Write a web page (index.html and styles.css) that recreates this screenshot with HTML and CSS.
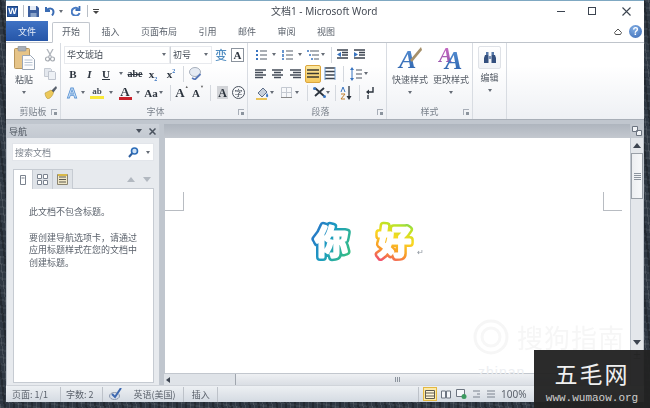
FILE: index.html
```html
<!DOCTYPE html>
<html lang="zh">
<head>
<meta charset="utf-8">
<title>文档1 - Microsoft Word</title>
<link rel="stylesheet" href="styles.css">
</head>
<body>
<svg class="defs" width="0" height="0">
  <defs>
    <symbol id="l-left" viewBox="0 0 12 10"><path d="M0 1h11M0 3.5h8M0 6h11M0 8.500h8" stroke="#444c58" stroke-width="1.300"/></symbol>
    <symbol id="l-center" viewBox="0 0 12 10"><path d="M0 1h11M2 3.500h7M0 6h11M2 8.500h7" stroke="#444c58" stroke-width="1.300"/></symbol>
    <symbol id="l-right" viewBox="0 0 12 10"><path d="M0 1h11M3 3.500h8M0 6h11M3 8.500h8" stroke="#444c58" stroke-width="1.300"/></symbol>
    <linearGradient id="g-ni" gradientUnits="userSpaceOnUse" x1="8" y1="0" x2="50" y2="20">
      <stop offset="0" stop-color="#2a72c8"/><stop offset=".45" stop-color="#1c9cc0"/><stop offset="1" stop-color="#38c080"/>
    </linearGradient>
    <linearGradient id="g-hao" gradientUnits="userSpaceOnUse" x1="100" y1="2" x2="84" y2="50">
      <stop offset="0" stop-color="#2cb8a0"/><stop offset=".22" stop-color="#b4e428"/><stop offset=".48" stop-color="#fbd820"/><stop offset=".76" stop-color="#f89a28"/><stop offset="1" stop-color="#f0506c"/>
    </linearGradient>
    <linearGradient id="g-a1" x1="0" y1="0" x2="0" y2="1"><stop offset="0" stop-color="#5a94d8"/><stop offset="1" stop-color="#2a5ea8"/></linearGradient>
    <linearGradient id="g-a2" x1="0" y1="0" x2="0" y2="1"><stop offset="0" stop-color="#d070c8"/><stop offset="1" stop-color="#9050a8"/></linearGradient>
  </defs>
</svg>

<div class="window">
  <header class="titlebar">
    <div class="qat">
      <span class="wlogo">W</span>
      <span class="qsep"></span>
      <svg class="q-save" width="11" height="11" viewBox="0 0 11 11"><path d="M0 0h9l2 2v9H0z" fill="#3d5f9e"/><path d="M2 0h6v4H2z" fill="#e4ebf5"/><path d="M2.500 7h6v4h-6z" fill="#8aa3c9"/></svg>
      <svg class="q-undo" width="10" height="10" viewBox="0 0 10 10"><path d="M1 1v4h4M1.500 4.500C4 1.500 8.500 2 8.500 6c0 1.500-.6 2.500-1.500 3.500" fill="none" stroke="#3a6cb4" stroke-width="2"/></svg>
      <span class="dd q-dd1"></span>
      <svg class="q-redo" width="10" height="10" viewBox="0 0 10 10"><path d="M8.500 0v4h-4" fill="none" stroke="#3a6cb4" stroke-width="1.800"/><path d="M8 3.500A4 4 0 1 0 8.500 7" fill="none" stroke="#4a7cc4" stroke-width="2"/></svg>
      <span class="qsep q-sep2"></span>
      <span class="q-more"></span>
    </div>
    <div class="doc-title">文档1 - Microsoft Word</div>
    <div class="winctl">
      <span class="wmin"></span>
      <span class="wmax"></span>
      <svg class="wclose" width="9" height="9" viewBox="0 0 9 9"><path d="M.5.500l8 8M8.500.500l-8 8" stroke="#3c4450" stroke-width="1.100"/></svg>
    </div>
  </header>

  <nav class="tabs">
    <span class="tab-file">文件</span>
    <span class="tab tab-on">开始</span>
    <span class="tab">插入</span>
    <span class="tab">页面布局</span>
    <span class="tab">引用</span>
    <span class="tab">邮件</span>
    <span class="tab">审阅</span>
    <span class="tab">视图</span>
    <span class="tabs-right">
      <svg width="8" height="8" viewBox="0 0 8 8"><path d="M.5 4.500L4 1l3.500 3.500-1 2h-5z" fill="none" stroke="#555" stroke-width="1"/></svg>
      <span class="help">?</span>
    </span>
  </nav>

  <section class="ribbon">
    <div class="group g-clip">
      <div class="g-body clip-body">
        <div class="paste">
          <svg width="21" height="24" viewBox="0 0 21 24"><rect x=".5" y="2.500" width="15" height="20" rx="1" fill="#e6c488" stroke="#b8965c"/><rect x="4" y="0" width="8" height="5" rx="1" fill="#a9afb8" stroke="#878d96" stroke-width=".6"/><path d="M8.500 9.500h8l4 4v10h-12z" fill="#fdfdfe" stroke="#9aa6b6"/><path d="M10.500 14h8M10.500 16.500h8M10.500 19h8" stroke="#b8c4d2"/></svg>
          <span class="big-lab">粘贴</span>
          <span class="dd"></span>
        </div>
        <div class="clip-tools">
          <svg width="10" height="13" viewBox="0 0 10 13"><path d="M2 0l4.500 8M8 0L3.500 8" stroke="#b0b5bc" stroke-width="1.300"/><circle cx="2.500" cy="10" r="2" fill="none" stroke="#a4a9b0" stroke-width="1.200"/><circle cx="7.500" cy="10" r="2" fill="none" stroke="#a4a9b0" stroke-width="1.200"/></svg>
          <svg width="12" height="12" viewBox="0 0 12 12"><path d="M.5.500h6l1 1v7h-7z" fill="#e4e8ee" stroke="#c6cbd3"/><path d="M4.500 3.500h6l1 1v7h-7z" fill="#eef1f5" stroke="#c0c5ce"/></svg>
          <svg width="13" height="13" viewBox="0 0 13 13"><path d="M12 0L7 5l2 2 4-5z" fill="#58606c"/><path d="M7 4L1 7c0 2 1 5 3 6 3-1 5-4 5.500-6.500z" fill="#ecc85a" stroke="#a98c30" stroke-width=".5"/></svg>
        </div>
      </div>
      <div class="g-label">剪贴板<span class="launch"></span></div>
    </div>

    <div class="group g-font">
      <div class="g-body rows">
        <div class="row r1">
          <span class="combo c-name">华文琥珀<span class="dd"></span></span>
          <span class="combo c-size">初号<span class="dd"></span></span>
          <span class="cell w18 wen">变</span>
          <span class="boxa">A</span>
        </div>
        <div class="row">
          <span class="cell w18 ser"><b>B</b></span>
          <span class="cell w15 ser"><b><i>I</i></b></span>
          <span class="cell w18 ser"><b><u>U</u></b></span>
          <span class="cell w12"><span class="dd"></span></span>
          <span class="cell w16 ser abe"><b><s>abe</s></b></span>
          <span class="cell w20 ser"><b>x<sub class="sb">2</sub></b></span>
          <span class="cell w16 ser"><b>x<sup class="sp">2</sup></b></span>
          <span class="cell w8"><span class="vsep"></span></span>
          <span class="cell w16">
            <svg width="13" height="13" viewBox="0 0 13 13"><ellipse cx="6" cy="5" rx="5.500" ry="4.500" fill="#e6ebf3" stroke="#a8b0bc"/><path d="M3 11l3 1.500L11.500 7" fill="none" stroke="#5878b8" stroke-width="1.800"/></svg>
          </span>
        </div>
        <div class="row">
          <span class="cell w16 glow">A</span>
          <span class="cell w6"><span class="dd"></span></span>
          <span class="cell w22 hl">ab<i class="hlbar"></i></span>
          <span class="cell w2"></span>
          <span class="cell w6 negl"><span class="dd"></span></span>
          <span class="cell w18 ml2 ared ser"><b>A</b><i class="redbar"></i></span>
          <span class="cell w6 ml1"><span class="dd"></span></span>
          <span class="cell w14 ml3 ser"><b>Aa</b></span>
          <span class="cell w6"><span class="dd"></span></span>
          <span class="cell w12"><span class="vsep"></span></span>
          <span class="cell w12 ser big"><b>A</b><sup class="up">▲</sup></span>
          <span class="cell w12 ml4 ser"><b>A</b><sup class="up">▼</sup></span>
          <span class="cell w12"><span class="vsep"></span></span>
          <span class="cell w14 shade ser"><b>A</b></span>
          <span class="cell w14 ml2 circ">字</span>
        </div>
      </div>
      <div class="g-label">字体<span class="launch"></span></div>
    </div>

    <div class="group g-para">
      <div class="g-body rows">
        <div class="row">
          <span class="cell w12"><svg width="11" height="10" viewBox="0 0 11 10"><path d="M0 1h2M0 5h2M0 9h2" stroke="#3874c0" stroke-width="1.800"/><path d="M4 1h7M4 5h7M4 9h7" stroke="#555e6a" stroke-width="1.200"/></svg></span>
          <span class="cell w14"><span class="dd"></span></span>
          <span class="cell w12"><svg width="11" height="10" viewBox="0 0 11 10"><path d="M1 0v3M1 4v3M1 8v2" stroke="#3874c0" stroke-width="1.500"/><path d="M4 1h7M4 5h7M4 9h7" stroke="#555e6a" stroke-width="1.200"/></svg></span>
          <span class="cell w14"><span class="dd"></span></span>
          <span class="cell w12"><svg width="12" height="10" viewBox="0 0 12 10"><path d="M0 1h2M2 5h2M4 9h2" stroke="#3874c0" stroke-width="1.500"/><path d="M3 1h9M5 5h7M7 9h5" stroke="#555e6a" stroke-width="1.200"/></svg></span>
          <span class="cell w8"><span class="dd"></span></span>
          <span class="cell w8"><span class="vsep"></span></span>
          <span class="cell w12 ml1"><svg width="11" height="11" viewBox="0 0 11 11"><path d="M0 1h11M5 3.500h6M5 6h6M0 9h11" stroke="#3c4450" stroke-width="1.300"/><path d="M4 3L0 5.500 4 8z" fill="#3874c0"/></svg></span>
          <span class="cell w12 ml5"><svg width="11" height="11" viewBox="0 0 11 11"><path d="M0 1h11M5 3.500h6M5 6h6M0 9h11" stroke="#3c4450" stroke-width="1.300"/><path d="M0 3l4 2.500L0 8z" fill="#3874c0"/></svg></span>
        </div>
        <div class="row">
          <span class="cell w12"><svg class="ln"><use href="#l-left"/></svg></span>
          <span class="cell w12 ml5"><svg class="ln"><use href="#l-center"/></svg></span>
          <span class="cell w12 ml6"><svg class="ln"><use href="#l-right"/></svg></span>
          <span class="cell w16 ml3 active"><svg width="12" height="9" viewBox="0 0 12 9"><path d="M0 1h12M0 4.500h12M0 8h12" stroke="#3c3a30" stroke-width="1.500"/></svg></span>
          <span class="cell w12 ml3"><svg width="12" height="13" viewBox="0 0 12 13"><path d="M1 1h10M1 4.500h10M1 8h10M1 11.500h10" stroke="#3c4450" stroke-width="1.300"/><path d="M1 0v13M11 0v13" stroke="#6a9ad0" stroke-width="1"/></svg></span>
          <span class="cell w12 ml1"><span class="vsep"></span></span>
          <span class="cell w12 ml1"><svg width="12" height="14" viewBox="0 0 12 14"><path d="M2 0L0 3h4zM2 14L0 11h4z" fill="#3874c0"/><path d="M2 3v8" stroke="#3874c0"/><path d="M6 3h6M6 7h6M6 11h6" stroke="#4c5460" stroke-width="1.200"/></svg></span>
          <span class="cell w8"><span class="dd"></span></span>
        </div>
        <div class="row">
          <span class="cell w14"><svg width="13" height="14" viewBox="0 0 13 14"><path d="M2 7l5-5 4 4-5 5z" fill="#c7d0dc" stroke="#60708a"/><path d="M11 7c1 2 2 3 .5 4s-2-2-.5-4z" fill="#3874c0"/><path d="M0 13h11" stroke="#e8b830" stroke-width="1.600"/></svg></span>
          <span class="cell w10 negl"><span class="dd"></span></span>
          <span class="cell w12 ml3"><svg width="11" height="11" viewBox="0 0 11 11"><path d="M.5.500h10v10H.5zM5.500.500v10M.5 5.500h10" fill="none" stroke="#c4c9d1"/><path d="M0 10.500h11" stroke="#888"/></svg></span>
          <span class="cell w10 negl2"><span class="dd"></span></span>
          <span class="cell w10"><span class="vsep"></span></span>
          <span class="cell w12 ml1"><svg width="13" height="11" viewBox="0 0 13 11"><path d="M2 9L6.500 5 11 9M2 1l4.500 4L11 1" fill="none" stroke="#2c343e" stroke-width="1.800"/><circle cx="1.500" cy="1.500" r="1.500" fill="#3874c0"/><circle cx="11.500" cy="9.500" r="1.500" fill="#3874c0"/></svg></span>
          <span class="cell w6"><span class="dd"></span></span>
          <span class="cell w8"><span class="vsep"></span></span>
          <span class="cell w12 ml1"><svg width="12" height="14" viewBox="0 0 12 14"><path d="M1 6l2-5 2 5" fill="none" stroke="#3874c0"/><path d="M1 8h4L1 13h4" fill="none" stroke="#c08030"/><path d="M9 0v11" stroke="#2c343e" stroke-width="1.300"/><path d="M6.500 10L9 14l2.500-4z" fill="#2c343e"/></svg></span>
          <span class="cell w12 ml1"><span class="vsep"></span></span>
          <span class="cell w8 ml1"><svg width="8" height="12" viewBox="0 0 8 12"><path d="M7 0v5H1" fill="none" stroke="#2c343e" stroke-width="1.400"/><path d="M3 2.500L0 5l3 2.500z" fill="#2c343e"/><path d="M2 8v4" stroke="#2c343e" stroke-width="1.400"/></svg></span>
        </div>
      </div>
      <div class="g-label">段落<span class="launch"></span></div>
    </div>

    <div class="group g-style">
      <div class="g-body style-body">
        <div class="bigbtn">
          <svg class="vis" width="24" height="24" viewBox="0 0 24 24"><text class="big-a" x="1" y="22" fill="url(#g-a1)">A</text><path d="M23 1L12 14l2 2L24 4z" fill="#a6906a"/></svg>
          <span class="big-lab">快速样式</span>
          <span class="dd"></span>
        </div>
        <div class="bigbtn">
          <svg class="vis" width="24" height="24" viewBox="0 0 24 24"><text class="big-a2" x="0" y="16" fill="url(#g-a2)">A</text><text class="big-a" x="6" y="23" fill="url(#g-a1)">A</text></svg>
          <span class="big-lab">更改样式</span>
          <span class="dd"></span>
        </div>
      </div>
      <div class="g-label">样式<span class="launch"></span></div>
    </div>

    <div class="group g-edit">
      <div class="editbox">
        <svg width="12" height="11" viewBox="0 0 12 11"><path d="M1 3h3.500v8H0V6zM7.500 3H11l1 3v5H7.500z" fill="#34507e"/><path d="M2 0h2.500v3H2zM7.500 0H10v3H7.500z" fill="#5678a8"/><path d="M4.500 4h3v3h-3z" fill="#7c93b6"/></svg>
      </div>
      <span class="big-lab">编辑</span>
      <span class="dd"></span>
    </div>
  </section>

  <main class="main">
    <aside class="nav">
      <div class="nav-head">
        <span>导航</span>
        <span class="nav-ctl"><span class="dd dd-dark"></span><svg width="7" height="7" viewBox="0 0 7 7"><path d="M.5.500l6 6M6.500.500l-6 6" stroke="#4a525e" stroke-width="1.500"/></svg></span>
      </div>
      <div class="search">
        <span class="search-text">搜索文档</span>
        <svg width="11" height="11" viewBox="0 0 11 11"><circle cx="6.500" cy="4" r="3" fill="#cfe2f6" stroke="#2c6cb8" stroke-width="1.600"/><path d="M4 6.500L1 10" stroke="#2c5c9c" stroke-width="2"/></svg>
        <span class="dd"></span>
      </div>
      <div class="nav-tabs">
        <span class="ntab ntab-on"><svg width="6" height="10" viewBox="0 0 6 10"><path d="M.5.500h5v9h-5zM1.500 3h3" fill="#fff" stroke="#7a828e"/></svg></span>
        <span class="ntab"><svg width="11" height="11" viewBox="0 0 11 11"><path d="M.5.500h4v4h-4zM6.500.500h4v4h-4zM.5 6.500h4v4h-4zM6.500 6.500h4v4h-4z" fill="#fff" stroke="#7a828e"/></svg></span>
        <span class="ntab"><svg width="11" height="11" viewBox="0 0 11 11"><path d="M.5.500h10v10H.5z" fill="#efe6c6" stroke="#8a8470"/><path d="M2 3h7M2 5.500h7M2 8h7" stroke="#5c5a50"/><path d="M1 0h9v2H1z" fill="#d8b848"/></svg></span>
        <span class="ntab-arrows"><i class="tri-up"></i><i class="tri-down"></i></span>
      </div>
      <div class="nav-body">
        <p class="nav-p">此文档不包含标题。</p>
        <p class="nav-p">要创建导航选项卡，请通过应用标题样式在您的文档中创建标题。</p>
      </div>
    </aside>

    <div class="docwrap">
      <div class="doccol">
        <div class="rulerband"></div>
        <div class="page">
          <i class="crop crop-l"></i>
          <i class="crop crop-r"></i>
          <div class="hello">
            <svg class="hello-svg" width="112" height="52" viewBox="0 0 112 52">
              <g class="hello-font">
                <text x="5" y="39" class="o" stroke="url(#g-ni)">你</text>
                <text x="5" y="39" class="n">你</text>
                <text x="68" y="39" class="o" stroke="url(#g-hao)">好</text>
                <text x="68" y="39" class="n">好</text>
              </g>
            </svg>
            <span class="pilcrow">↵</span>
          </div>
          <div class="sogou">
            <svg width="36" height="36" viewBox="0 0 36 36"><circle cx="18" cy="18" r="16" fill="none" stroke="#f6f6f6" stroke-width="3"/><circle cx="18" cy="18" r="9" fill="none" stroke="#f7f7f7" stroke-width="3"/></svg>
            <span>搜狗指南</span>
          </div>
        </div>
        <div class="hscroll">
          <span class="tri-left"></span>
          <span class="hthumb"><i class="grip-v"></i></span>
        </div>
      </div>
      <div class="vscroll">
        <span class="vbtn-ruler">
          <svg width="10" height="10" viewBox="0 0 10 10"><path d="M.5.500h5v5h-5zM4.500 4.500h5v5h-5z" fill="#f2f4f7" stroke="#6c7480"/></svg>
        </span>
        <span class="vbtn"><i class="tri-up dark"></i></span>
        <span class="vthumb"><i class="grip-h"></i></span>
        <span class="vtrack"></span>
        <span class="vbtn"><i class="tri-down dark"></i></span>
        <span class="vbtn sm">±</span>
        <span class="vbtn sm2"></span>
      </div>
    </div>
  </main>

  <footer class="status">
    <span class="st st1">页面: 1/1</span>
    <span class="st st2">字数: 2</span>
    <span class="st st3">
      <svg width="13" height="12" viewBox="0 0 13 12"><ellipse cx="5.500" cy="8" rx="5" ry="3.500" fill="#d8dfeb" stroke="#8c98ac"/><path d="M3 6l3 3 6-9" fill="none" stroke="#3d68b0" stroke-width="2"/></svg>
      <span class="st3-t">英语(美国)</span>
    </span>
    <span class="st st4">插入</span>
    <span class="st-right">
      <span class="view on"><svg width="10" height="9" viewBox="0 0 10 9"><path d="M.5.500h9v8h-9zM.5 3h9M.5 6h9" fill="#fff6d8" stroke="#5c5a50"/></svg></span>
      <span class="view"><svg width="10" height="9" viewBox="0 0 10 9"><path d="M.5 1h4v7h-4zM5.500 1h4v7h-4z" fill="#f4f6f9" stroke="#6c7480"/></svg></span>
      <span class="view"><svg width="11" height="10" viewBox="0 0 11 10"><path d="M.5.500h8v7h-8z" fill="#f4f6f9" stroke="#6c7480"/><circle cx="8" cy="7.500" r="2.500" fill="#3c9a60"/></svg></span>
      <span class="view"><svg width="7" height="8" viewBox="0 0 7 8"><path d="M0 1h7M4 4h3M0 7h7" stroke="#7a828e"/></svg></span>
      <span class="view"><svg width="8" height="8" viewBox="0 0 8 8"><path d="M0 1h8M0 4h8M0 7h8" stroke="#7a828e"/></svg></span>
      <span class="zoom-val">100%</span>
    </span>
  </footer>
</div>

<div class="zhinan">zhinan</div>
<aside class="wm">
  <div class="wm-t">五毛网</div>
  <div class="wm-u">www.wumaow.org</div>
</aside>
</body>
</html>
```
FILE: styles.css
```css
* { box-sizing: border-box; }
html, body { margin: 0; height: 100%; }
body {
  width: 650px; height: 408px; overflow: hidden; position: relative;
  font-family: "Noto Sans CJK SC", "Noto Sans", sans-serif;
  font-size: 9px; color: #555c66;
  background:
    repeating-linear-gradient(83deg, rgba(255,255,255,.10) 0 1px, transparent 1px 4px, rgba(0,0,0,.25) 4px 6px, transparent 6px 9px),
    repeating-linear-gradient(12deg, rgba(255,255,255,.06) 0 2px, transparent 2px 7px),
    #2e3742;
}
.defs { position: absolute; }
svg { display: block; flex: none; }
svg.vis { overflow: visible; }
p { margin: 0; }

.window {
  margin-left: 6px; width: 638px; height: 402px;
  display: flex; flex-direction: column;
  background: #fff; border-top: 1px solid #7fa8c2;
  filter: blur(.5px);
}

/* title bar */
.titlebar { height: 20px; display: flex; align-items: center; position: relative; }
.qat { display: flex; align-items: center; padding-left: 1px; width: 265px; }
.wlogo {
  width: 11px; height: 11px; background: #2c5ca8; color: #fff; border: 1px solid #1e4684;
  font: bold 9px/9px "Liberation Sans", sans-serif; text-align: center;
}
.qsep { width: 1px; height: 12px; background: #b8bec6; margin: 0 4px 0 5px; }
.q-undo { margin-left: 6px; }
.q-dd1 { margin-left: 4px; }
.q-redo { margin-left: 8px; }
.q-sep2 { margin-left: 6px; }
.q-more { width: 6px; height: 5px; border-top: 1px solid #444; margin-left: 1px; position: relative; }
.q-more::after { content: ""; position: absolute; left: 0; top: 1px; border: 3px solid transparent; border-top-color: #444; border-bottom: 0; }
.doc-title { font: 10px/14px "Noto Sans", "Noto Sans CJK SC", sans-serif; color: #444a54; white-space: nowrap; }
.winctl { margin-left: auto; display: flex; align-items: center; padding-right: 13px; }
.wmin { width: 8px; height: 1px; background: #3c4450; }
.wmax { width: 8px; height: 8px; border: 1px solid #3c4450; margin-left: 23px; }
.wclose { margin-left: 26px; }

/* tabs */
.tabs { height: 22px; display: flex; align-items: flex-end; border-bottom: 1px solid #bfc4cb; font-size: 9px; color: #5b626c; }
.tab-file {
  width: 42px; height: 20px; margin-bottom: 1px; background: linear-gradient(#3f72c4, #2656a8); color: #e8eef8;
  display: flex; align-items: center; justify-content: center;
}
.tab { height: 21px; padding: 0 10.5px; display: flex; align-items: center; margin-bottom: -1px; padding-bottom: 3px; margin-left: 0; }
.tab:nth-child(3) { margin-left: 1px; }
.tab:nth-child(n+4) { padding: 0 10.5px 3px; margin-left: .5px; }
.tab-on { width: 38px; padding: 0 0 2px; justify-content: center; margin-left: 4px; background: #fff; border: 1px solid #c2c7ce; border-bottom-color: #fff; border-radius: 2px 2px 0 0; }
.tabs-right { margin-left: auto; align-self: center; display: flex; align-items: center; gap: 7px; padding-right: 2px; }
.help {
  width: 13px; height: 13px; border-radius: 50%; background: radial-gradient(circle at 40% 30%, #82aee4, #3868b4); color: #fff;
  font: bold 10px/13px "Liberation Sans", sans-serif; text-align: center;
}

/* ribbon */
.ribbon { height: 77px; display: flex; background: linear-gradient(#fff 30%, #eef0f4); border-bottom: 1px solid #a8aeb7; }
.group { display: flex; flex-direction: column; border-right: 1px solid #d8dce2; position: relative; }
.g-clip { width: 55px; }
.g-font { width: 187px; padding-left: 3px; }
.g-para { width: 139px; padding-left: 7px; }
.g-style { width: 86px; }
.g-edit { width: 34px; align-items: center; padding-top: 3px; }
.g-body { height: 62px; }
.g-label { height: 14px; line-height: 13px; text-align: center; font-size: 9px; color: #7c838d; position: relative; }
.launch { position: absolute; right: 3px; top: 4px; width: 6px; height: 6px; border: 1px solid #a8aeb8; border-width: 1px 0 0 1px; }
.launch::after { content: ""; position: absolute; right: 0; bottom: 0; width: 3px; height: 3px; background: #8c949e; }
.dd { display: inline-block; width: 0; height: 0; border: 2px solid transparent; border-top: 3px solid #666c76; border-bottom: 0; flex: none; }
.dd-dark { border: 3.500px solid transparent; border-top: 4px solid #4a525e; border-bottom: 0; }

.clip-body { display: flex; }
.paste { width: 36px; display: flex; flex-direction: column; align-items: center; padding-top: 3px; }
.big-lab { font-size: 9px; line-height: 12px; color: #555c66; margin-top: 4px; white-space: nowrap; }
.paste .dd, .bigbtn .dd { margin-top: 5px; }
.clip-tools { width: 16px; display: flex; flex-direction: column; align-items: center; padding-top: 6px; gap: 6px; margin-left: 0; }

.rows { display: flex; flex-direction: column; padding-top: 2px; }
.row { display: flex; align-items: center; height: 19px; }
.r1 { height: 19px; margin-bottom: 0; }
.combo {
  height: 18px; background: #fff; border: 1px solid #e8eaee; font-size: 9px; color: #444c56;
  display: flex; align-items: center; justify-content: space-between; padding: 0 3px 0 2px;
}
.c-name { width: 106px; }
.c-size { width: 42px; margin-left: 0; border-left: 1px solid #d0d4d9; }
.cell { display: flex; align-items: center; justify-content: center; height: 18px; flex: none; position: relative; }
.w2 { width: 2px; } .w6 { width: 6px; } .w8 { width: 8px; } .w10 { width: 10px; } .w12 { width: 12px; }
.w14 { width: 14px; } .w15 { width: 15px; } .w16 { width: 16px; } .w18 { width: 18px; } .w20 { width: 20px; } .w22 { width: 22px; }
.ml1 { margin-left: 1px; } .ml2 { margin-left: 2px; } .ml3 { margin-left: 3px; } .ml4 { margin-left: 4px; } .ml5 { margin-left: 5px; } .ml6 { margin-left: 6px; }
.negl { margin-left: -2px; } .negl2 { margin-left: 0; }
.ser { font: 11px/14px "Liberation Serif", serif; color: #2c343e; }
.abe { font-size: 10px; }
.sb, .sp { font-size: 6px; line-height: 0; color: #3874c0; }
.vsep { width: 1px; height: 16px; background: #d4d8de; }
.wen { color: #4f8cc0; font-size: 12px; font-weight: 500; }
.boxa { width: 13px; height: 14px; border: 1px solid #8c949e; font: bold 11px/12px "Liberation Serif", serif; text-align: center; color: #2c343e; background: #fff; margin-left: 1px; }
.glow { font: bold 14px/14px "Liberation Sans", sans-serif; color: #cfe4f8; -webkit-text-stroke: .8px #5c94d4; }
.hl { font: bold 9px/10px "Liberation Serif", serif; color: #444c56; flex-direction: column; }
.hlbar { width: 14px; height: 3px; background: #f8e838; display: block; }
.ared { flex-direction: column; font-size: 13px; line-height: 11px; }
.redbar { width: 13px; height: 3px; background: #c8202a; display: block; }
.big b { font-size: 13px; }
.up { font-size: 4px; line-height: 0; color: #666; align-self: flex-start; margin-top: 3px; }
.shade { background: #d2d4d8; height: 13px; width: 11px; margin-left: 1px; margin-right: 2px; font-size: 12px; }
.circ { width: 13px; height: 13px; border: 1px solid #4a525e; border-radius: 50%; font-size: 8px; line-height: 1; color: #3c4450; }
.ln { width: 12px; height: 10px; }
.active { background: linear-gradient(#fbe7a0, #f6c95c); border: 1px solid #dca63c; border-radius: 2px; }

.style-body { display: flex; padding-left: 5px; gap: 5px; }
.bigbtn { width: 36px; display: flex; flex-direction: column; align-items: center; padding-top: 3px; }
.bigbtn .big-lab { margin-top: 4px; }
.big-a { font: bold italic 26px "Liberation Serif", serif; }
.big-a2 { font: bold italic 20px "Liberation Serif", serif; }
.editbox { width: 23px; height: 23px; border: 1px solid #dfe2e7; border-radius: 2px; background: linear-gradient(#fff, #f1f3f6); display: flex; align-items: center; justify-content: center; }
.g-edit .big-lab { margin-top: 3px; }
.g-edit .dd { margin-top: 5px; }

/* main */
.main { flex: 1; min-height: 0; display: flex; background: #c0c6ce; padding: 4px 1px 0 1px; }
.nav { width: 153px; display: flex; flex-direction: column; background: #e7eaee; border-right: 1px solid #c2c8d0; }
.nav-head { height: 14px; padding: 0 3px 0 2px; background: linear-gradient(#cdd2d9, #c3c9d1); display: flex; align-items: center; justify-content: space-between; color: #4a525c; }
.nav-ctl { display: flex; align-items: center; gap: 7px; padding-right: 0; }
.search { height: 18px; margin: 5px 5px 0 5px; background: #fff; border: 1px solid #e2e5ea; display: flex; align-items: center; padding: 0 2px 0 2px; color: #7c838d; }
.search-text { margin-right: auto; }
.search .dd { margin-left: 7px; margin-right: 1px; }
.nav-tabs { height: 20px; margin: 8px 5px 0 6px; display: flex; align-items: stretch; position: relative; }
.ntab { width: 20px; display: flex; align-items: center; justify-content: center; background: #dfe3e8; border: 1px solid #c6cbd2; border-bottom: 0; border-left: 0; }
.ntab-on { background: #fff; border-left: 1px solid #c6cbd2; position: relative; z-index: 1; }
.ntab-arrows { margin-left: auto; display: flex; align-items: center; gap: 8px; padding-right: 3px; }
.tri-up, .tri-down { display: block; width: 0; height: 0; border: 4px solid transparent; }
.tri-up { border-top: 0; border-bottom: 5px solid #b2b8c0; }
.tri-down { border-bottom: 0; border-top: 5px solid #b2b8c0; }
.tri-up.dark { border-bottom-color: #3c4450; }
.tri-down.dark { border-top-color: #3c4450; }
.nav-body { flex: 1; margin: -1px 5px 2px 6px; background: #fff; border: 1px solid #c6cbd2; padding: 17px 16px 0 15px; color: #5b626c; }
.nav-p { font-size: 9px; line-height: 12.500px; margin-bottom: 13px; }

.docwrap { flex: 1; min-width: 0; display: flex; margin-left: 4px; }
.doccol { flex: 1; min-width: 0; display: flex; flex-direction: column; }
.rulerband { height: 14px; background: linear-gradient(#aeb5be, #c3c8cf); }
.page { flex: 1; min-height: 0; background: #fff; border-left: 1px solid #c0c6ce; position: relative; }
.crop { position: absolute; top: 54px; width: 19px; height: 19px; border: 0 solid #b8bcc2; }
.crop-l { left: 0; border-width: 0 1px 1px 0; }
.crop-r { left: 438px; border-width: 0 0 1px 1px; }
.hello { display: flex; align-items: flex-end; padding: 77px 0 0 145px; }
.hello-font { font: 500 33px "Noto Sans CJK SC", sans-serif; }
.hello-font .o { stroke-width: 8px; stroke-linejoin: round; fill: #fff; }
.hello-font .n { stroke: #fff; stroke-width: 3px; stroke-linejoin: round; fill: #fff; }
.pilcrow { font-size: 8px; line-height: 10px; color: #8c949e; margin: 0 0 10px -5px; }
.sogou { position: absolute; left: 308px; top: 181px; display: flex; align-items: center; gap: 8px; font-size: 26px; line-height: 36px; letter-spacing: 1px; color: #f6f6f6; white-space: nowrap; }

.hscroll { height: 12px; background: #dfe3e8; border-top: 1px solid #c2c7ce; display: flex; align-items: center; padding-left: 2px; }
.tri-left { width: 0; height: 0; border: 3.500px solid transparent; border-left: 0; border-right: 4px solid #3c4450; }
.hthumb { margin-left: 65px; flex: 1; height: 11px; background: linear-gradient(#eef0f3, #dadee4); border-left: 1px solid #a0a6ae; position: relative; }
.grip-v { position: absolute; left: 159px; top: 3px; width: 5px; height: 5px; background: repeating-linear-gradient(90deg, #8c949e 0 1px, transparent 1px 2px); }

.vscroll { width: 12px; display: flex; flex-direction: column; align-items: stretch; background: #e4e7eb; margin-left: 1px; }
.vbtn-ruler { height: 14px; display: flex; align-items: center; justify-content: center; background: #c3c8cf; }
.vbtn { height: 15px; display: flex; align-items: center; justify-content: center; flex: none; color: #3c4450; font-size: 9px; }
.vthumb { height: 46px; background: linear-gradient(90deg, #eceef1, #f7f8fa); border: 1px solid #9aa0a8; display: flex; align-items: center; justify-content: center; }
.grip-h { width: 7px; height: 7px; background: repeating-linear-gradient(#8c949e 0 1px, transparent 1px 2px); }
.vtrack { flex: 1; }
.sm { height: 11px; }
.sm2 { height: 24px; }

/* status */
.status { height: 17px; display: flex; align-items: center; background: linear-gradient(#edf0f3, #d4dae2); color: #5b626c; font-size: 9px; border-top: 1px solid #d0d4da; }
.st { height: 15px; display: flex; align-items: center; border-right: 1px solid #bdc2c9; white-space: nowrap; }
.st1 { padding: 0 12px 0 6px; }
.st2 { padding: 0 8px 0 5px; }
.st3 { padding: 0 7px 0 6px; }
.st3-t { margin-left: 12px; }
.st4 { padding: 0 7px 0 8px; }
.st-right { margin-left: auto; width: 226px; display: flex; align-items: center; border-left: 1px solid #bdc2c9; height: 15px; padding-left: 4px; }
.view { width: 14px; height: 14px; display: flex; align-items: center; justify-content: center; }
.view + .view { margin-left: 1px; }
.view.on { border: 1px solid #e4b840; background: #fbe9a8; margin-right: 1px; }
.zoom-val { font: 10px "Noto Sans", sans-serif; margin-left: 3px; color: #5b626c; }

/* overlays */
.zhinan { position: absolute; left: 478px; top: 364px; font: 14px/16px "Liberation Sans", sans-serif; letter-spacing: 1px; color: #eceef1; }
.wm { position: absolute; right: 0; bottom: 0; width: 116px; height: 58px; background: rgba(34,34,34,.96); color: #f0f0f0; text-align: center; }
.wm-t { font-size: 23px; line-height: 30px; letter-spacing: 2px; margin-top: 8px; font-weight: 400; }
.wm-u { font: 11px/14px "Liberation Mono", monospace; color: #cfcfcf; margin-top: 3px; white-space: nowrap; }
```
